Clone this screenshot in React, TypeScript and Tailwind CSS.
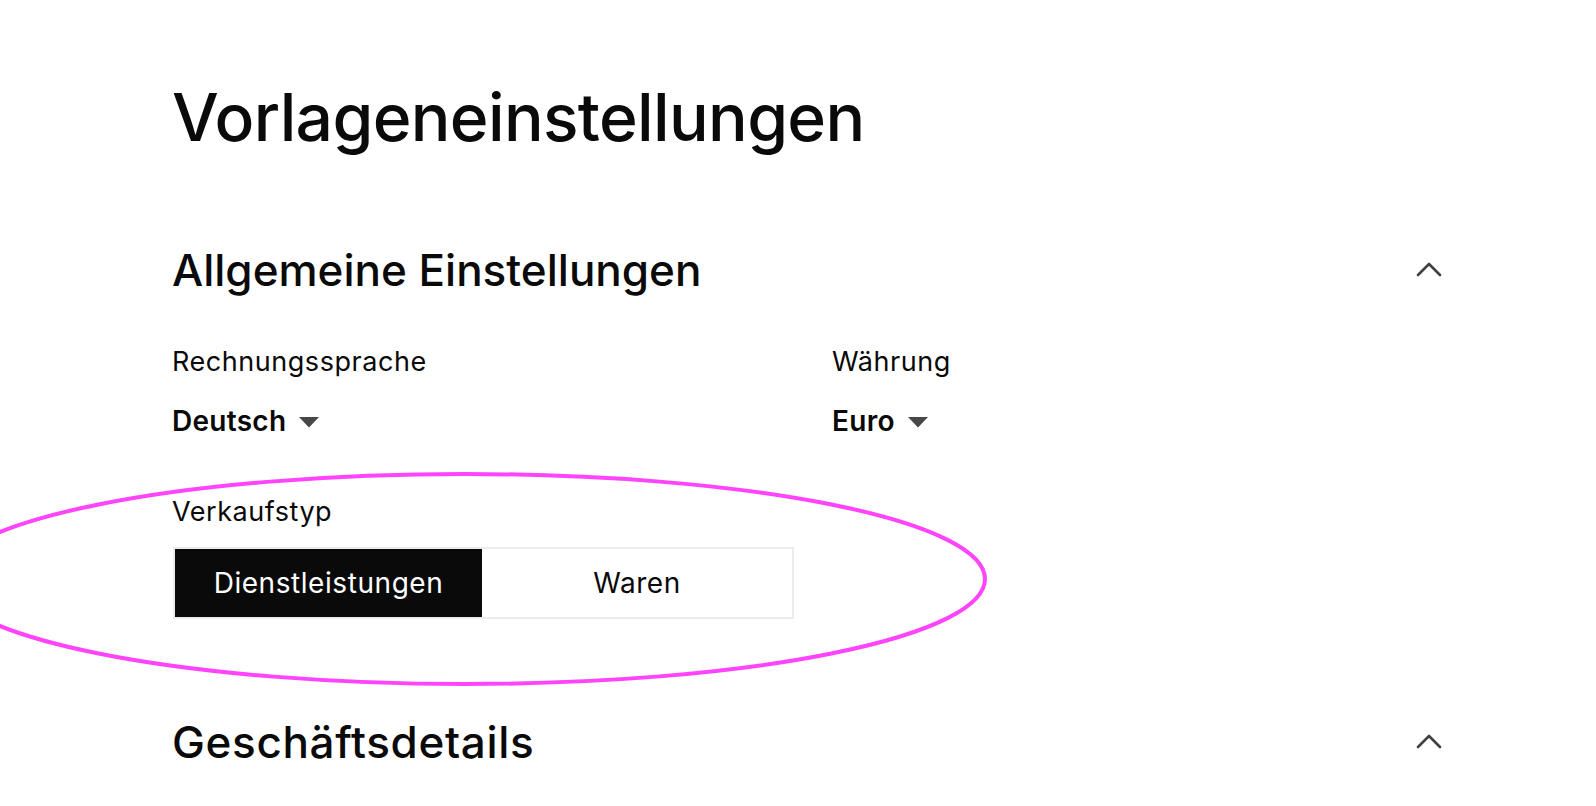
const Caret = () => (
  <svg width="22" height="12" viewBox="0 0 22 12" className="ml-[12px] mt-[1px]">
    <path d="M1 1 H21 L11 11.5 Z" fill="#474747" />
  </svg>
);

const Chevron = () => (
  <svg width="26" height="16" viewBox="0 0 26 16" className="-translate-y-[1px]">
    <polyline points="2,14 13,3 24,14" fill="none" stroke="#404040" strokeWidth="2.6" strokeLinecap="round" strokeLinejoin="round" />
  </svg>
);

const SectionHeader = ({ title, wide }: { title: string; wide?: boolean }) => (
  <div className="flex items-center justify-between">
    <h2 className={wide ? "text-[44px] font-medium leading-none tracking-[0.015em]" : "text-[44px] font-medium leading-none"}>
      {title}
    </h2>
    <Chevron />
  </div>
);

export default function App() {
  return (
    <div
      className="relative min-h-[806px] overflow-hidden bg-white text-[#0a0a0a]"
      style={{ fontFamily: "Inter, 'Noto Sans', sans-serif" }}
    >
      <div className="pl-[172px] pr-[154px] pt-[84px]">
        <h1 className="text-[66px] font-medium tracking-[-0.01em] leading-none">Vorlageneinstellungen</h1>

        <section className="mt-[98px]">
          <SectionHeader title="Allgemeine Einstellungen" />
          <div className="grid grid-cols-[660px_1fr] mt-[56px]">
            <div>
              <div className="text-[27px] leading-none tracking-[0.02em]">Rechnungssprache</div>
              <div className="flex items-center mt-[32px]">
                <span className="text-[28px] font-semibold leading-none tracking-[0.01em]">Deutsch</span>
                <Caret />
              </div>
            </div>
            <div>
              <div className="text-[27px] leading-none tracking-[0.02em]">Währung</div>
              <div className="flex items-center mt-[32px]">
                <span className="text-[28px] font-semibold leading-none tracking-[0.01em]">Euro</span>
                <Caret />
              </div>
            </div>
          </div>

          <div className="mt-[63px] text-[27px] leading-none tracking-[0.02em]">Verkaufstyp</div>
          <div className="mt-[22px] ml-px flex w-[621px] h-[72px] border-2 border-[#ebebf0]">
            <button className="w-[307px] bg-[#0a0a0a] text-white text-[28px] tracking-[0.02em]">Dienstleistungen</button>
            <button className="flex-1 bg-white text-[#0a0a0a] text-[28px] tracking-[0.02em]">Waren</button>
          </div>
        </section>

        <section className="mt-[101px]">
          <SectionHeader title="Geschäftsdetails" wide />
        </section>
      </div>

      <svg className="absolute left-0 top-0 pointer-events-none" width="1596" height="806">
        <ellipse cx="465" cy="579" rx="520" ry="105" fill="none" stroke="#ff44fc" strokeWidth="4" />
      </svg>
    </div>
  );
}
